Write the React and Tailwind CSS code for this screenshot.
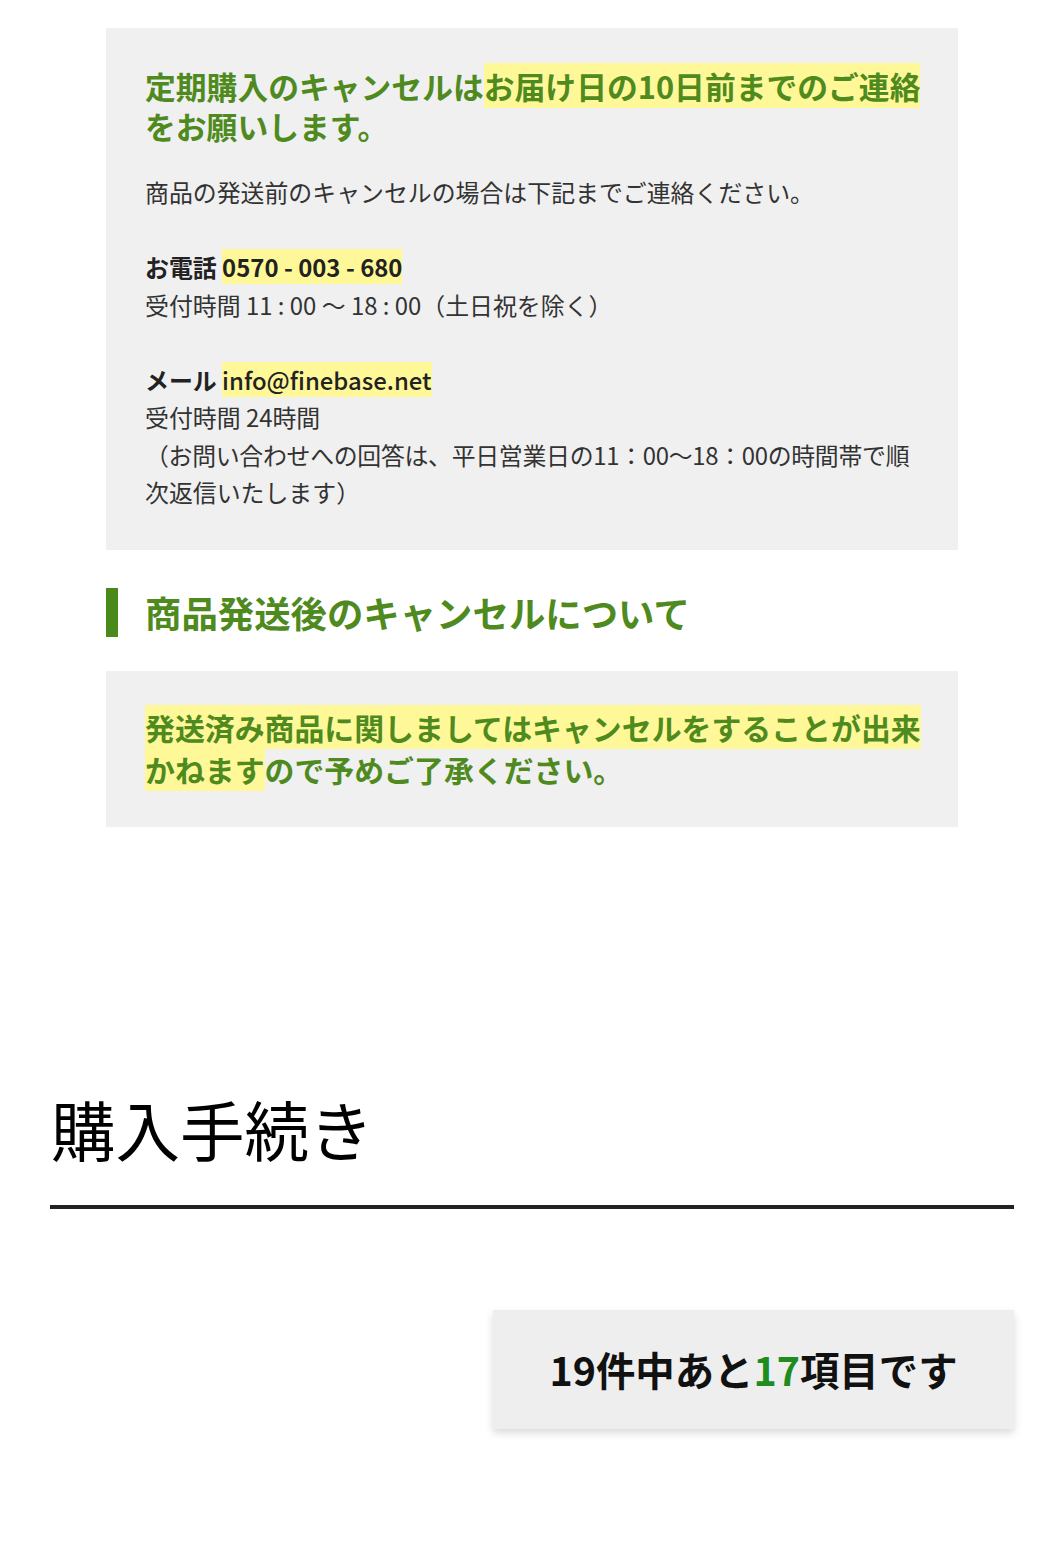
const FONT = { fontFamily: '"Noto Sans CJK JP", "Noto Sans", sans-serif' }

function Mark({ children }) {
  return <span className="bg-[#fff899]">{children}</span>
}

export default function App() {
  return (
    <div className="bg-white min-h-[1543px] pt-[28px]" style={FONT}>
      <div className="ml-[50px] mr-[47px]">
        <div className="mx-[56px]">
          {/* before shipping */}
          <div className="bg-[#f0f0f0] pt-[38px] pb-[39px] px-[39px]">
            <p className="text-[30.8px] leading-[40px] font-bold text-[#4f8a1f] whitespace-nowrap">
              定期購入のキャンセルは<Mark>お届け日の10日前までのご連絡</Mark>
              <br />
              をお願いします。
            </p>
            <div className="mt-[27px] text-[23.9px] leading-[37.5px] text-[#333] whitespace-nowrap">
              <p>商品の発送前のキャンセルの場合は下記までご連絡ください。</p>
              <p className="mt-[37.5px]">
                <span className="font-bold text-[#222]">お電話 </span>
                <Mark><span className="font-bold text-[#222]">0570 - 003 - 680</span></Mark>
                <br />
                受付時間 11 : 00 ～ 18 : 00（土日祝を除く）
              </p>
              <p className="mt-[37.5px]">
                <span className="font-bold text-[#222]">メール </span>
                <Mark><span className="font-medium text-[#222]">info@finebase.net</span></Mark>
                <br />
                受付時間 24時間
                <br />
                <span className="tracking-[-0.3px]">（お問い合わせへの回答は、平日営業日の11：00～18：00の時間帯で順</span>
                <br />
                次返信いたします）
              </p>
            </div>
          </div>

          {/* after shipping heading */}
          <div className="mt-[38px] flex items-center">
            <div className="w-[12px] h-[49px] bg-[#4a8a1a]" />
            <h2 className="ml-[27px] text-[36.4px] leading-[49px] font-bold text-[#4f8a1f]">
              商品発送後のキャンセルについて
            </h2>
          </div>

          <div className="mt-[34px] bg-[#f0f0f0] pt-[35px] pb-[37px] px-[39px]">
            <p className="text-[29.9px] leading-[42px] font-bold text-[#4f8a1f] whitespace-nowrap">
              <Mark>発送済み商品に関しましてはキャンセルをすることが出来</Mark>
              <br />
              <Mark>かねます</Mark>ので予めご了承ください。
            </p>
          </div>
        </div>

        {/* purchase steps */}
        <h1 className="mt-[261px] text-[64.5px] leading-[80px] text-black ml-[1px]">購入手続き</h1>
        <div className="mt-[37px] h-[4px] bg-[#222]" />

        <div className="mt-[101px] flex justify-end">
          <div className="w-[521px] h-[119px] bg-[#eeeeee] flex items-center justify-center shadow-[0_4px_8px_rgba(0,0,0,0.15)]">
            <p className="text-[39.4px] font-bold text-[#111] leading-none">
              19件中あと<span className="text-[#1e8c1e]">17</span>項目です
            </p>
          </div>
        </div>
      </div>
    </div>
  )
}
